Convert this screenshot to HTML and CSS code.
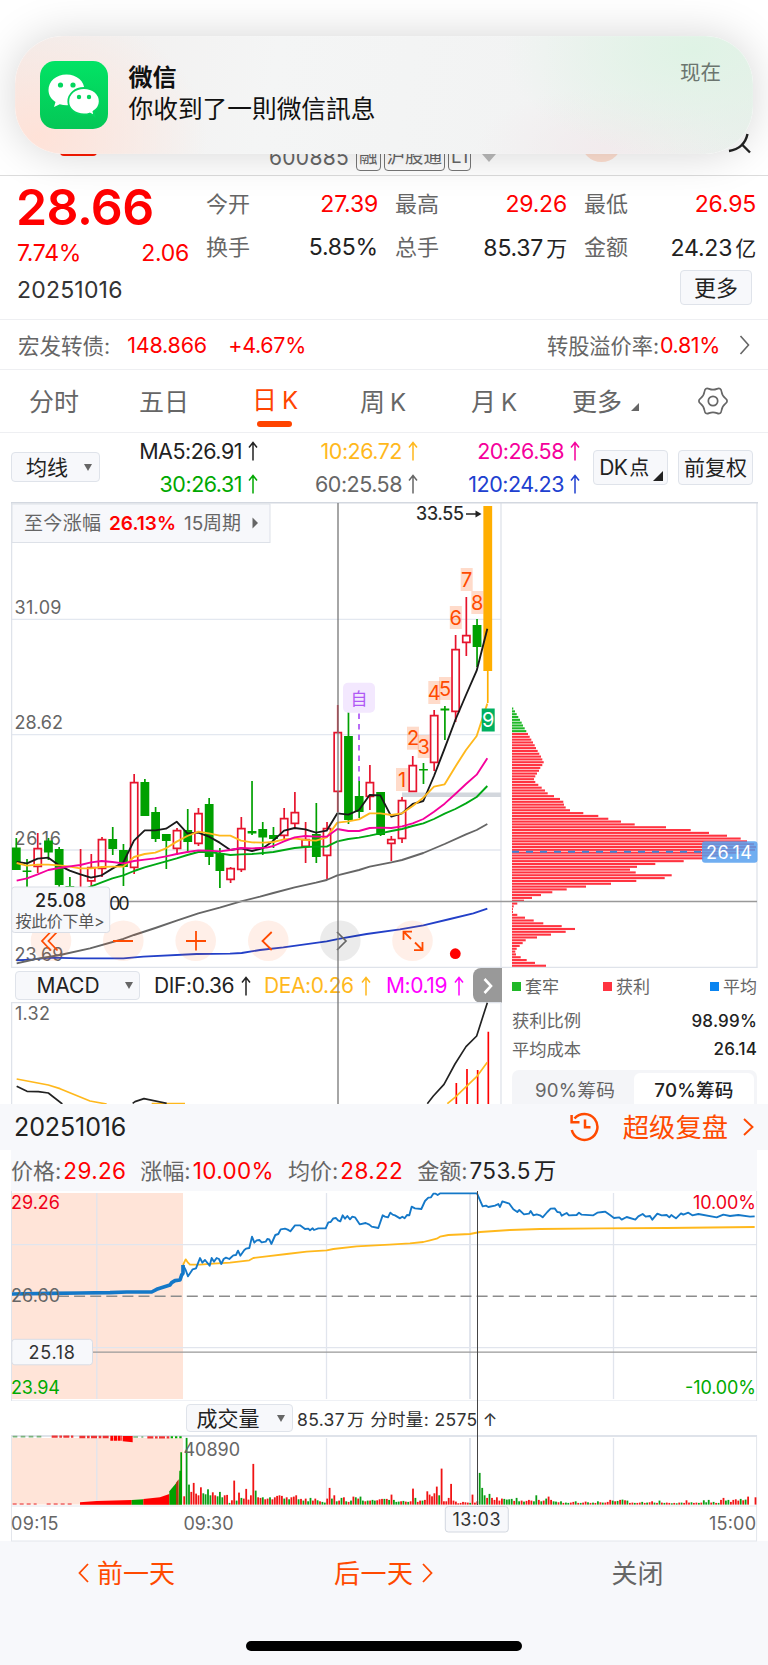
FILE: index.html
```html
<!DOCTYPE html>
<html lang="zh-CN">
<head>
<meta charset="utf-8">
<title>600885 日K</title>
<link rel="stylesheet" href="styles.css">
</head>
<body>
<div class="screen">
  <header class="nav">
    <span class="nav-dash"></span>
    <div class="nav-code"><span class="code">600885</span><i class="tag">融</i><i class="tag">沪股通</i><i class="tag">L1</i><b class="nav-caret"></b></div>
    <span class="nav-dot"></span>
    <svg class="nav-search" width="26" height="24" viewBox="726 132 26 24"><path d="M747.500 134C746 141 741 149 729 151M742 144.500L750 152.500" fill="none" stroke="#222" stroke-width="2.400"/></svg>
  </header>

  <section class="quote">
    <div class="price-box">
      <div class="last">28.66</div>
      <div class="chg"><span>7.74%</span><span>2.06</span></div>
    </div>
    <dl class="stats">
      <div><dt>今开</dt><dd class="up">27.39</dd></div>
      <div><dt>最高</dt><dd class="up">29.26</dd></div>
      <div><dt>最低</dt><dd class="up">26.95</dd></div>
      <div><dt>换手</dt><dd>5.85%</dd></div>
      <div><dt>总手</dt><dd>85.37<em>万</em></dd></div>
      <div><dt>金额</dt><dd>24.23<em>亿</em></dd></div>
    </dl>
    <div class="date">20251016</div>
    <button class="btn more">更多</button>
  </section>

  <section class="bond">
    <span class="lbl">宏发转债:</span><span class="up v1">148.866</span><span class="up v2">+4.67%</span>
    <span class="lbl right">转股溢价率:</span><span class="up v3">0.81%</span>
    <svg class="chev" width="11" height="20" viewBox="0 0 11 20"><path d="M1.500 1L9.500 10L1.500 19" fill="none" stroke="#666" stroke-width="1.600"/></svg>
  </section>

  <nav class="tabs">
    <span class="t1">分时</span><span class="t2">五日</span><span class="t3 on">日<i>K</i></span><span class="t4">周<i>K</i></span><span class="t5">月<i>K</i></span><span class="t6">更多<b></b></span>
    <svg class="gear" width="30" height="28" viewBox="-15 -14 30 28"><path d="M12.450 -2.600Q15.800 0 12.450 2.600Q9.100 5.250 8.500 9.500Q7.900 13.700 3.950 12.100Q0 10.500 -3.950 12.100Q-7.900 13.700 -8.500 9.500Q-9.100 5.250 -12.450 2.600Q-15.800 0 -12.450 -2.600Q-9.100 -5.250 -8.500 -9.500Q-7.900 -13.700 -3.950 -12.100Q0 -10.500 3.950 -12.100Q7.900 -13.700 8.500 -9.500Q9.100 -5.250 12.450 -2.600Z" fill="none" stroke="#666" stroke-width="1.700" stroke-linejoin="round"/><circle r="4.700" fill="none" stroke="#666" stroke-width="1.700"/></svg>
  </nav>

  <section class="ma">
    <button class="btn ma-btn"><span class="up2">均线</span><b class="caret"></b></button>
    <div class="ma-grid">
      <span class="k">MA5:26.91<svg class="arr" width="10" height="20" viewBox="0 0 10 20"><path d="M5 19.500V1.500M1 6.500L5 1.500L9 6.500"/></svg></span>
      <span class="y">10:26.72<svg class="arr" width="10" height="20" viewBox="0 0 10 20"><path d="M5 19.500V1.500M1 6.500L5 1.500L9 6.500"/></svg></span>
      <span class="p">20:26.58<svg class="arr" width="10" height="20" viewBox="0 0 10 20"><path d="M5 19.500V1.500M1 6.500L5 1.500L9 6.500"/></svg></span>
      <span class="g">30:26.31<svg class="arr" width="10" height="20" viewBox="0 0 10 20"><path d="M5 19.500V1.500M1 6.500L5 1.500L9 6.500"/></svg></span>
      <span class="s">60:25.58<svg class="arr" width="10" height="20" viewBox="0 0 10 20"><path d="M5 19.500V1.500M1 6.500L5 1.500L9 6.500"/></svg></span>
      <span class="b">120:24.23<svg class="arr" width="10" height="20" viewBox="0 0 10 20"><path d="M5 19.500V1.500M1 6.500L5 1.500L9 6.500"/></svg></span>
    </div>
    <button class="btn dk"><span class="up2">DK<em>点</em></span><b></b></button>
    <button class="btn fq"><span class="up2">前复权</span></button>
  </section>

  <section class="kline">
    <svg class="price" width="748" height="466" viewBox="11 502 748 466">
      <g fill="none" stroke="#dfe3ea" stroke-width="1.300">
        <path d="M11 619.300H501M11 734.700H501M11 850H501" stroke="#e3e8f0"/>
        <path d="M11.600 502V968M501 503V968M757 503V968M11 967.300H757"/>
        <path d="M11 502.800H758" stroke="#d3d8e0" stroke-width="1.600"/>
      </g>
      <g class="t" fill="#666" font-size="18">
        <text x="14.500" y="613.500" textLength="47">31.09</text>
        <text x="14.500" y="729" textLength="48.500">28.62</text>
        <text x="14.500" y="844.800" textLength="46.500">26.16</text>
        <text x="14.500" y="960.800" textLength="49">23.69</text>
      </g>
      <rect x="402" y="792.500" width="99" height="4.500" fill="#d3d7dd"/>
      <g id="candles"></g>
      <g id="averages"></g>
      <g id="chips"></g>
      <path d="M512 851.700H702" stroke="#3a86d8" stroke-width="2" stroke-dasharray="7 7"/>
      <path d="M110 901.500H757" stroke="#999" stroke-width="1.300"/>
      <rect x="702" y="841.300" width="55.500" height="21.500" rx="3" fill="#559fee" fill-opacity=".84"/>
      <text class="t" x="706" y="858.500" font-size="18" fill="#fff" textLength="46">26.14</text>
      <g id="marks" class="t" font-size="20" text-anchor="middle"></g>
      <rect x="343" y="682.700" width="32" height="30" rx="5" fill="#f3e8fe"/>
      <text class="t" x="359" y="705" font-size="17" fill="#b05af5" text-anchor="middle">自</text>
      <path d="M359 713.500V781" stroke="#b96cf7" stroke-width="2" stroke-dasharray="5.500 5"/>
      <text class="t" x="416" y="520" font-size="18" fill="#222" stroke="#222" stroke-width=".2" textLength="48">33.55</text>
      <path d="M466 514H478" stroke="#222" stroke-width="1.500"/><path d="M475.500 510.500L481.500 514L475.500 517.500Z" fill="#222"/>
      <g>
        <g fill="#ff6420" fill-opacity=".1"><circle cx="51" cy="940.700" r="20.300"/><circle cx="123.300" cy="940.700" r="20.300"/><circle cx="195.700" cy="940.700" r="20.300"/><circle cx="268.300" cy="940.700" r="20.300"/><circle cx="412.500" cy="940.700" r="20.300"/></g>
        <circle cx="340.300" cy="940.700" r="20.300" fill="#000" fill-opacity=".08"/>
        <g fill="none" stroke="#ff4a00" stroke-width="1.800">
          <path d="M51 931.500L42 941L51 950.500M57.500 931.500L48.500 941L57.500 950.500M113 941H133M186 941H206M196 931V950.500M271.700 932L262.500 941L271.700 950"/>
          <path d="M403.500 940V931.700H412M404 932L411 939M415 942.500L422 949.500M422.500 942V950.200H414"/>
        </g>
        <path d="M337 932L346 941L337 950" fill="none" stroke="#666" stroke-width="1.700"/>
        <circle cx="455.300" cy="953.700" r="5.400" fill="#f00"/>
      </g>
      <text class="t" x="109" y="910" font-size="18" fill="#222" textLength="20.500">00</text>
      <rect x="11.700" y="887" width="98" height="45.500" rx="3" fill="#f7f8fb" stroke="#d9dde5"/>
      <text class="t" x="35" y="907" font-size="18" font-weight="500" fill="#222" textLength="51">25.08</text>
      <text class="t" x="15.500" y="926.500" font-size="16" fill="#555" textLength="89">按此价下单&gt;</text>
      <rect x="12" y="504" width="258" height="38.500" fill="#f7f8fb" fill-opacity=".96" stroke="#dde1e8"/>
      <g class="t" font-size="19">
        <text x="24" y="530" fill="#666" textLength="77">至今涨幅</text>
        <text x="109" y="530" fill="#f00" font-weight="600" textLength="67">26.13%</text>
        <text x="184" y="530" fill="#666" textLength="57">15周期</text>
      </g>
      <path d="M252.500 517.500L258 523L252.500 528.500Z" fill="#666"/>
    </svg>
    <div class="split">
      <div class="macd">
        <div class="macd-bar">
          <button class="btn macd-btn">MACD<b class="caret"></b></button>
          <span class="m1 k">DIF:0.36<svg class="arr" width="10" height="20" viewBox="0 0 10 20"><path d="M5 19.500V1.500M1 6.500L5 1.500L9 6.500"/></svg></span>
          <span class="m2 y">DEA:0.26<svg class="arr" width="10" height="20" viewBox="0 0 10 20"><path d="M5 19.500V1.500M1 6.500L5 1.500L9 6.500"/></svg></span>
          <span class="m3 f">M:0.19<svg class="arr" width="10" height="20" viewBox="0 0 10 20"><path d="M5 19.500V1.500M1 6.500L5 1.500L9 6.500"/></svg></span>
          <span class="next"><svg width="12" height="18" viewBox="0 0 12 18"><path d="M2.500 2L9 9L2.500 16" fill="none" stroke="#fff" stroke-width="2.600"/></svg></span>
        </div>
        <svg width="491" height="102" viewBox="11 1002 491 102">
          <path d="M11 1002.500H501M11.600 1002V1104M501 1002V1104" stroke="#dfe3ea" stroke-width="1.300" fill="none"/>
          <text class="t" x="15" y="1020" font-size="18" fill="#666" textLength="35">1.32</text>
          <g transform="translate(0 900) scale(.33333)" fill="none" stroke-width="5" stroke-linejoin="round">
            <path d="M1369 549V612M1401 507V612M1433 510V612M1465 395V612" stroke="#f00"/>
            <path d="M50 537L145 555L180 566L270 603L320 612M455 611H555M1342 611L1365 592L1430 530L1462 487" stroke="#ffb81c"/>
            <path d="M50 559L81 574L115 575L145 579L187 612M398 610L405 605L432 596L500 610M1282 611L1300 588L1332 553L1365 492L1398 440L1430 408L1462 308" stroke="#222"/>
          </g>
        </svg>
      </div>
      <div class="chip-info">
        <div class="legend"><span><i class="lg"></i>套牢</span><span><i class="lr"></i>获利</span><span><i class="lb"></i>平均</span></div>
        <div class="ci"><span>获利比例</span><b>98.99%</b></div>
        <div class="ci"><span>平均成本</span><b>26.14</b></div>
        <div class="seg"><span>90%筹码</span><span class="sel">70%筹码</span></div>
      </div>
    </div>
    <i class="cross"></i>
  </section>

  <section class="replay">
    <div class="replay-head">
      <span class="rd">20251016</span>
      <svg class="hist" width="30" height="30" viewBox="570 1112 30 30"><path d="M575.500 1118.500A13 13 0 1 1 572.800 1130M572.600 1115V1122.300H580.500M586 1119.500V1127.300H591.500" fill="none" stroke="#ff4a00" stroke-width="2.500"/></svg>
      <span class="rt">超级复盘</span>
      <svg class="rchev" width="11" height="18" viewBox="0 0 11 18"><path d="M1 1L9.500 9L1 17" fill="none" stroke="#ff4a00" stroke-width="1.900"/></svg>
    </div>
    <div class="replay-info">
      <span>价格:<b>29.26</b></span><span>涨幅:<b>10.00%</b></span><span>均价:<b>28.22</b></span><span>金额:<b class="d">753.5<em>万</em></b></span>
    </div>
    <div class="intraday">
      <svg width="748" height="210" viewBox="11 1191 748 210">
        <rect x="11" y="1191" width="747" height="210" fill="#fff"/>
        <rect x="11.500" y="1193" width="171.500" height="206" fill="#ffe4d8"/>
        <path d="M96.800 1193V1399M326.500 1193V1399M613.500 1193V1399M11 1244.700H757M11 1347.700H757" stroke="#e1e5ed" stroke-width="1.300"/>
        <path d="M470 1193V1399" stroke="#e1e5ed" stroke-width="2"/>
        <path d="M11.500 1191V1401M756.600 1191V1401M11 1401H757" stroke="#dfe3ea" fill="none"/>
        <path d="M58 1296.200H757" stroke="#8c8c8c" stroke-width="1.600" stroke-dasharray="11 5.100"/>
        <path d="M92 1352.200H757" stroke="#999" stroke-width="1.200"/>
        <g id="minutes"></g>
        <g class="t" font-size="18">
          <text x="11" y="1208.800" fill="#f00018" textLength="49">29.26</text>
          <text x="693" y="1208.800" fill="#f00018" textLength="63">10.00%</text>
          <text x="11" y="1301.700" fill="#666" textLength="49">26.60</text>
          <text x="11" y="1394.300" fill="#0a0" textLength="49">23.94</text>
          <text x="685" y="1394.300" fill="#0a0" textLength="71">-10.00%</text>
        </g>
        <rect x="11.800" y="1339.300" width="80.700" height="25.500" rx="3" fill="#f7f8fb" stroke="#d9dde5"/>
        <text class="t" x="28.500" y="1359" font-size="18" fill="#333" textLength="46.500">25.18</text>
      </svg>
      <div class="vol-bar"><button class="btn vol-btn"><span class="up2">成交量</span><b class="caret"></b></button><span>85.37<em>万</em> 分时量: 2575 ↑</span></div>
      <svg width="748" height="107" viewBox="11 1435 748 107">
        <rect x="11.500" y="1438" width="171.500" height="66.500" fill="#ffe4d8"/>
        <path d="M96.800 1438V1504M326.500 1438V1504M613.500 1438V1504" stroke="#e1e5ed" stroke-width="1.300"/>
        <path d="M470 1438V1504" stroke="#e1e5ed" stroke-width="2"/>
        <path d="M11.500 1435V1541M756.600 1435V1541M11 1506H757M11 1541H757" stroke="#e3e6ec" fill="none"/>
        <path d="M11 1436H757" stroke="#dfe3ea" stroke-width="2"/>
        <g id="volume"></g>
        <g class="t" font-size="18" fill="#666">
          <text x="183.500" y="1455.500" textLength="56.500">40890</text>
          <text x="11" y="1530" textLength="47.500">09:15</text>
          <text x="183.500" y="1530" textLength="50">09:30</text>
          <text x="709" y="1530" textLength="47">15:00</text>
        </g>
        <rect x="445.300" y="1506.500" width="63" height="25.500" rx="3" fill="#f7f8fb" stroke="#d3d8e0"/>
        <text class="t" x="452.500" y="1526" font-size="18" fill="#333" textLength="48">13:03</text>
      </svg>
      <i class="cross2"></i>
    </div>
    <footer class="foot">
      <span class="f1"><svg width="11" height="20" viewBox="0 0 11 20"><path d="M10 1L1.500 10L10 19" fill="none" stroke="#ff4a00" stroke-width="1.800"/></svg>前一天</span>
      <span class="f2">后一天<svg width="11" height="20" viewBox="0 0 11 20"><path d="M1 1L9.500 10L1 19" fill="none" stroke="#ff4a00" stroke-width="1.800"/></svg></span>
      <span class="f3">关闭</span>
    </footer>
    <i class="home"></i>
  </section>

  <aside class="notice">
    <svg class="wx" width="68" height="68" viewBox="0 0 68 68">
      <defs><linearGradient id="wxg" x1="0" y1="0" x2="0" y2="1"><stop offset="0" stop-color="#02e365"/><stop offset="1" stop-color="#04c756"/></linearGradient></defs>
      <rect width="68" height="68" rx="15" fill="url(#wxg)"/>
      <path d="M26.500 13.500C16 13.500 8.500 20.500 8.500 29C8.500 34 11 38 15.500 41L14 46L19.800 43.200C22 44 24.300 44.300 26.500 44.300C37 44.300 44.500 37.500 44.500 29C44.500 20.500 37 13.500 26.500 13.500Z" fill="#fff"/>
      <path d="M44 27C35 27 28.300 33 28.300 40.500C28.300 48 35 53.500 44 53.500C46 53.500 48 53.200 49.800 52.500L54.500 55L53.500 50.600C57.500 48 59.700 44.500 59.700 40.500C59.700 33 53 27 44 27Z" fill="#fff" stroke="#03d55e" stroke-width="1.800"/>
      <g fill="#03d65e"><circle cx="20.500" cy="24" r="2.600"/><circle cx="33" cy="24" r="2.600"/><circle cx="39" cy="36" r="2.200"/><circle cx="49" cy="36" r="2.200"/></g>
    </svg>
    <div class="msg"><b>微信</b><span>你收到了一則微信訊息</span></div>
    <time>现在</time>
  </aside>
</div>
<script src="charts.js"></script>
</body>
</html>
```

FILE: styles.css
```css
* { box-sizing: border-box; margin: 0; padding: 0; }
body { width: 768px; background: #fff; font-family: Inter, "Noto Sans CJK SC", sans-serif; color: #222; }
i, em { font-style: normal; }
svg { display: block; flex: none; }
span { white-space: nowrap; }
.t { font-family: Inter, "Noto Sans CJK SC", sans-serif; }
.screen { position: relative; width: 768px; height: 1665px; overflow: hidden; }
.up { color: #f00; }
.btn { font: inherit; display: flex; align-items: center; justify-content: center; background: #f7f8fb; border: 1.5px solid #dfe3ea; border-radius: 4px; color: #222; }
.btn .up2 { padding-bottom: 3px; }
.caret { width: 0; height: 0; border: 4.500px solid transparent; border-top: 7px solid #666; border-bottom: 0; }
.arr { fill: none; stroke: currentColor; stroke-width: 1.5; }
.k { color: #222; } .y { color: #ffb81c; } .p { color: #f5009b; } .g { color: #00a800; } .s { color: #666; } .b { color: #2040d0; } .f { color: #f0f; }

.nav { height: 176px; border-bottom: 1.5px solid #dcdcdc; position: relative; display: flex; align-items: flex-end; }
.nav-code { display: flex; align-items: center; height: 35px; margin-left: 269px; color: #666; }
.code { font-size: 21px; width: 87px; letter-spacing: .3px; }
.tag { font-size: 18.500px; line-height: 23px; height: 27px; border: 1.5px solid #777; border-radius: 4px; padding: 0 2px; margin-right: 3px; }
.nav-caret { border: 7px solid transparent; border-top: 8px solid #bbb; border-bottom: 0; margin-left: 8px; }
.nav-dash { position: absolute; left: 60px; top: 146px; width: 37px; height: 10px; border-radius: 4px; background: #ff1a00; }
.nav-dot { position: absolute; left: 581px; top: 121px; width: 41px; height: 41px; border-radius: 50%; background: #ffe0d2; }
.nav-search { position: absolute; left: 726px; top: 132px; }

.quote { height: 144px; border-bottom: 1px solid #eeeff2; display: grid; grid-template-columns: 190px 1fr 16px; grid-template-rows: 90px 1fr; }
.price-box { padding-left: 16px; }
.last { font-size: 50px; font-weight: 600; color: #f00; line-height: 60px; margin-top: 1px; letter-spacing: -.6px; }
.chg { display: flex; justify-content: space-between; color: #f00; font-size: 23px; line-height: 32px; letter-spacing: -.3px; padding-right: 1px; padding-left: 1px; }
.stats { margin-left: 16px; display: grid; grid-template-columns: 172px 172px 172px; column-gap: 17px; grid-template-rows: 43px 43px; padding-top: 6px; grid-column: 2 / 4; }
.stats div { display: flex; justify-content: space-between; align-items: center; }
.stats dt { font-size: 22px; color: #666; padding-bottom: 4px; }
.stats dd { font-size: 23px; letter-spacing: -.2px; }
.stats em { font-size: 21px; margin-left: 3px; }
.date { font-size: 23px; padding-left: 17px; line-height: 48px; letter-spacing: .2px; color: #333; }
.more { width: 72px; height: 35px; font-size: 22px; justify-self: end; margin-top: 4px; padding-bottom: 3px; }

.bond { height: 50px; border-bottom: 1px solid #eeeff2; display: flex; align-items: center; padding-left: 18px; font-size: 21.500px; }
.bond .lbl { color: #666; padding-bottom: 1px; }
.bond .v1 { margin-left: 17px; width: 101px; letter-spacing: -.2px; }
.bond .v2 { letter-spacing: -.3px; }
.bond .right { margin-left: auto; font-size: 21.200px; }
.bond .v3 { width: 79px; margin-left: 1px; letter-spacing: -.4px; }
.bond .chev { margin-right: 18px; }

.tabs { height: 63px; border-bottom: 1px solid #eeeff2; display: grid; grid-template-columns: 29px 110px 114px 107px 111px 101px 126px 70px; grid-template-rows: 60px; align-items: center; font-size: 25px; color: #666; }
.tabs i { margin-left: 5px; font-size: 24px; }
.t1 { grid-column: 2; }
.tabs .t3 { margin-left: -1px; }
.tabs .on { color: #ff4400; position: relative; line-height: 60px; }
.on::after { content: ""; position: absolute; left: 5px; bottom: 4px; width: 35px; height: 6px; border-radius: 3px; background: #ff4400; }
.t6 b { display: inline-block; border-left: 8px solid transparent; border-bottom: 8px solid #666; margin-left: 9px; }
.gear { margin-top: 2px; }

.ma { height: 69px; display: flex; align-items: center; padding-left: 11px; }
.ma-btn { width: 89px; height: 30px; font-size: 21px; gap: 16px; padding-left: 7px; margin-top: -1px; }
.ma-grid { display: grid; grid-template-columns: 158px 160px 162px; grid-template-rows: 33px 33px; width: 480px; font-size: 21.500px; letter-spacing: -.5px; margin-top: -1px; }
.ma-grid span { display: flex; justify-content: flex-end; align-items: center; gap: 6px; }
.dk { width: 75px; height: 35px; margin-left: 13px; font-size: 21px; position: relative; padding-right: 13px; letter-spacing: -.6px; }
.dk em { margin-left: 2px; font-size: 20px; }
.dk b { position: absolute; right: 4px; bottom: 3px; border-left: 10px solid transparent; border-bottom: 10px solid #222; }
.fq { width: 75px; height: 35px; margin-left: 10px; font-size: 21px; }

.kline { position: relative; height: 602px; padding-left: 11px; overflow: hidden; }
.kline .price { height: 466px; }
.cross { position: absolute; left: 337px; top: 1px; width: 1.500px; height: 601px; background: #777; opacity: .65; }
.split { display: flex; height: 136px; margin-top: -1px; }
.macd { width: 491px; }
.macd-bar { height: 35px; display: grid; grid-template-columns: 4px 125px 14px 110px 122px 87px 29px; align-items: center; font-size: 21px; letter-spacing: -.4px; }
.macd-bar span { display: flex; align-items: center; gap: 7px; margin-top: 1px; }
.macd-btn { grid-column: 2; height: 29px; letter-spacing: 0; gap: 25px; padding-left: 14px; margin-top: 1px; }
.m1 { grid-column: 4; }
.macd-bar .next { height: 35px; background: #999; border-radius: 8px 0 0 8px; justify-content: center; }
.chip-info { margin-left: 10px; width: 245px; font-size: 17px; color: #666; }
.legend { display: grid; grid-template-columns: 91px 1fr auto; height: 37px; align-items: center; }
.legend span { display: flex; align-items: center; gap: 4px; }
.legend i { width: 9px; height: 9px; margin-top: 2px; }
.lg { background: #20b828; } .lr { background: #ff3340; } .lb { background: #0a84f0; }
.ci { display: flex; justify-content: space-between; height: 28.500px; align-items: center; }
.ci:nth-child(2) { margin-top: 2px; }
.ci b { font-weight: 500; color: #222; letter-spacing: .2px; padding-top: 1px; }
.ci span { font-size: 17.300px; padding-bottom: 1px; }
.seg { margin-top: 7px; height: 50px; border-radius: 7px; background: #f4f5f8; display: grid; grid-template-columns: 122px 120px; padding-top: 3px; font-size: 18.700px; }
.seg span { height: 47px; line-height: 35px; text-align: center; border-radius: 6px; letter-spacing: .2px; padding-left: 4px; }
.seg .sel { background: #fff; color: #222; font-weight: 500; padding: 0; }

.replay { position: relative; background: #f7f8fb; height: 561px; }
.replay-head { height: 46px; display: flex; align-items: center; padding: 0 14px 0 14px; }
.rd { font-size: 25px; letter-spacing: -.1px; }
.hist { margin-left: auto; }
.rt { color: #ff4a00; font-size: 26.300px; margin-left: 24px; margin-right: 15px; padding-bottom: 3px; }
.replay-info { height: 41px; display: flex; align-items: center; gap: 14px; font-size: 22px; color: #666; border: solid #fff; border-width: 0 11px; padding-bottom: 3px; }
.replay-info b { font-weight: 400; color: #f00; margin-left: 2px; letter-spacing: .35px; font-size: 22.500px; }
.replay-info .d { color: #222; }
.replay-info em { margin-left: 3px; }
.intraday { position: relative; height: 350px; background: #fff; padding-left: 11px; }
.vol-bar { height: 34px; display: flex; align-items: center; padding-left: 175px; font-size: 17.500px; letter-spacing: .35px; color: #333; }
.vol-bar em { margin-left: 2px; }
.vol-btn { width: 107px; height: 28px; font-size: 21px; gap: 17px; margin-right: 4px; padding-left: 2px; letter-spacing: 0; }
.cross2 { position: absolute; left: 477px; top: 0; width: 1px; height: 314px; background: #444; }
.foot { height: 60px; display: flex; align-items: center; font-size: 26px; color: #ff4a00; }
.foot span { display: flex; align-items: center; gap: 8px; }
.foot svg { margin-top: 3px; }
.f1 { margin-left: 78px; }
.f2 { margin-left: 159px; letter-spacing: .5px; }
.foot .f3 { margin-left: 179px; color: #666; }
.home { position: absolute; left: 246px; top: 537px; width: 276px; height: 9.500px; border-radius: 5px; background: #000; }

.notice { position: absolute; left: 15px; top: 36px; width: 738px; height: 118px; border-radius: 48px; display: flex; padding: 25px 32px 0 24.500px; 
  background: radial-gradient(ellipse 190px 110px at 92% 12%, #dff3e5 0, #e3f2e700 100%), radial-gradient(ellipse 170px 130px at 3% 85%, #ffe2d8 0, #fde6dd00 100%), radial-gradient(ellipse 130px 60px at 80% 95%, #f2ebed 0, #f4ecef00 100%), linear-gradient(100deg, #f1eeed, #f4f5f5 35%, #f2f3f3 70%, #eaefec);
  box-shadow: 0 0 44px rgba(0,0,0,.17), inset 0 0 1px #fff; }
.msg { margin-left: 21px; display: flex; flex-direction: column; }
.msg b { font-size: 24px; line-height: 34px; font-weight: 600; color: #111; }
.msg span { font-size: 24.700px; line-height: 29px; color: #111; font-family: Inter, "Noto Sans CJK TC", sans-serif; }
.notice time { margin-left: auto; font-size: 20.500px; line-height: 24px; color: #6b756f; }
```

FILE: charts.js
```js
const add = (id, html) => { document.getElementById(id).innerHTML += html; };

// Daily candles: [direction, body top, body bottom, wick top, wick bottom]
const days = [
  ['g',847.5,870,838,870],['g',870.5,872,859,887],['r',848,867,833,873],['g',840.5,852.5,838,860],['g',849,885,847,887],
  ['g',886,900,877,900],['r',890,895,849,900],['r',867,881.5,854,890],['r',839,869,837,877],['g',839,849,827,855],
  ['g',850,867,844,886],['r',782,868,774,874],['g',782,816,779,816],['g',812,839,807,842],['g',834,841,834,869],
  ['r',830,849,828,855],['g',830,842,809,852],['r',813,844,808,846],['g',804,857,798,865],['g',853,871,848,888],
  ['r',868,880,867,883],['r',828,870,817,872],['g',831,833.5,781,835],['g',829,837.5,822,855],['g',835,839,827,848],
  ['r',818,836,808,840],['r',812,824,792,828],['r',839,847,822,863],['g',834,857,803,863],['r',828,856,822,879],
  ['r',732,792,705,812],['g',736,820,707,824],['g',796,812,781,818],['r',782,797,765,810],['g',792,835,792,836],
  ['r',839,844,836,861],['r',800,839,797,843],['r',765,792,756,792],['g',769,770.5,763,784],['r',715,763,710,771],
  ['g',708.5,710.5,706,740],['r',649,712,635,722],['r',635,643,597,656],['g',625,647,619,667],['o',506,671,506,703]
];
const ink = { r: '#e6142d', g: '#00a000', o: '#ffae00' };
add('candles', days.map(([d, t, b, w1, w2], i) => {
  const x = 16.3 + i * 10.715, c = ink[d];
  if (d === 'r') return `<path d="M${x} ${w1}V${t}M${x} ${b}V${w2}M${x - 3.6} ${t + .6}H${x + 3.6}V${b - .6}H${x - 3.6}Z" fill="none" stroke="${c}" stroke-width="1.7"/>`;
  return `<path d="M${x} ${w1}V${w2}" stroke="${c}" stroke-width="1.7"/><rect x="${x - 4.4}" y="${t}" width="8.8" height="${b - t}" fill="${c}"/>`;
}).join(''));

// Moving averages, in thirds of a pixel below y = 500
const averages = {
  '#2340c8': '50,1381 100,1378 150,1373 240,1375 370,1375 430,1370 590,1362 690,1361 725,1359 780,1350 850,1342 980,1324 1020,1316 1100,1302 1200,1288 1270,1276 1350,1257 1420,1240 1462,1226',
  '#666': '50,1390 81,1383 113,1376 145,1371 180,1365 270,1345 370,1317 402,1305 466,1284 530,1262 595,1240 659,1223 723,1204 780,1190 820,1179 884,1162 948,1148 980,1140 1012,1126 1077,1110 1109,1100 1174,1087 1206,1080 1270,1059 1334,1032 1398,1003 1430,990 1462,972',
  '#00a814': '240,1172 272,1160 305,1147 337,1135 370,1126 402,1113 434,1102 466,1093 498,1084 530,1075 562,1065 595,1056 627,1056 659,1060 691,1065 723,1063 756,1062 790,1059 820,1056 852,1050 884,1044 916,1041 948,1040 980,1040 1012,1024 1045,1017 1077,1013 1109,1007 1141,1000 1174,993 1206,987 1238,978 1270,970 1302,957 1334,941 1366,927 1398,910 1430,891 1462,858',
  '#1a1a1a': '50,1086 81,1090 113,1076 145,1073 177,1096 209,1112 241,1123 273,1133 305,1126 337,1106 370,1087 402,1022 434,991 466,991 498,986 530,965 562,1000 595,998 627,1010 659,1028 691,1050 723,1045 756,1053 790,1044 820,1022 852,992 884,984 916,988 948,998 980,992 1012,940 1045,944 1077,930 1109,885 1141,886 1174,950 1206,940 1238,912 1270,903 1302,828 1334,745 1366,660 1398,585 1430,512 1462,386',
  '#ffb81c': '50,1089 81,1097 113,1094 145,1094 177,1096 209,1100 241,1105 273,1105 305,1101 337,1100 370,1100 402,1071 434,1062 466,1058 498,1045 530,1025 562,1008 595,995 627,1000 659,1007 691,1007 723,1022 756,1027 790,1028 820,1026 852,1018 884,1015 916,1020 948,1022 980,1012 1012,968 1045,964 1077,958 1109,940 1141,940 1174,945 1206,940 1238,918 1270,893 1302,860 1334,853 1366,800 1398,750 1430,708 1462,611',
  '#f5009b': '50,1142 81,1135 113,1123 145,1110 177,1104 209,1099 241,1095 273,1087 305,1083 337,1086 370,1090 402,1083 434,1079 466,1075 498,1069 530,1062 562,1056 595,1051 627,1052 659,1054 691,1050 723,1044 756,1045 800,1043 820,1038 852,1024 884,1012 916,1008 948,1010 980,1010 1012,987 1045,993 1077,993 1109,984 1141,983 1174,984 1206,979 1238,970 1270,957 1302,935 1334,911 1366,882 1398,852 1430,824 1462,775'
};
add('averages', '<g transform="translate(0 500) scale(.33333)" fill="none" stroke-width="5.6" stroke-linejoin="round">' +
  Object.entries(averages).map(([c, p]) => `<polyline points="${p}" stroke="${c}"/>`).join('') + '</g>');

// Cost distribution, top to bottom
const chips = [4,9,14,19,24,29,33,38,43,48,53,58,63,68,72,77,82,87,91,95,91,85,81,75,70,66,70,79,89,99,107,126,144,154,156,161,174,214,259,289,327,368,462,536,591,645,686,705,726,732,729,684,630,574,515,430,375,354,371,479,458,373,297,222,164,121,87,60,36,16,5,3,3,16,39,65,94,149,189,161,117,75,41,32,23,14,10,12,26,44,69,102];
add('chips', chips.map((w, i) => `<rect x="512" y="${(707.5 + i * 2.826).toFixed(2)}" width="${(w / 3).toFixed(1)}" height="2.100" fill="${i < 9 ? '#20b828' : '#ff3340'}"/>`).join(''));

// Nine-turn marks: [digit, centre x, top y]
add('marks', [[1,402,768],[2,413,726.7],[3,423.7,735],[4,434.3,681],[5,445,677],[6,455.8,606],[7,466.7,568],[8,477.3,591]].map(([n, x, y]) =>
  `<rect x="${x - 6}" y="${y}" width="12" height="23" fill="#ff6a20" fill-opacity=".24"/><text x="${x}" y="${y + 18.5}" fill="#ff4a00">${n}</text>`).join('') +
  '<rect x="481.700" y="708.500" width="13" height="23" fill="#00b060"/><text x="488.200" y="727" fill="#fff">9</text>');

// Minute prices, in thirds of a pixel below y = 1100
const open = '36,582 150,580 240,579 330,578 380,576 455,576 470,568 510,555 515,548 525,542 540,540 545,525 549,520 549,495';
const price = '549,495 557,510 564,529 578,508 588,505 600,474 607,488 615,480 629,497 635,474 642,485 650,474 657,477 664,492 671,477 678,473 688,477 700,466 708,465 714,452 721,467 733,450 738,446 748,444 756,410 763,428 770,421 778,420 785,427 797,425 802,417 808,418 814,432 826,405 835,402 842,388 855,386 863,389 871,394 885,376 900,376 915,387 925,386 930,391 938,385 942,390 955,385 977,385 985,367 992,366 1000,355 1008,354 1014,361 1021,364 1028,346 1035,356 1042,348 1050,358 1057,350 1065,352 1079,373 1097,369 1108,374 1115,380 1135,384 1148,346 1155,350 1164,352 1171,338 1178,344 1185,346 1200,355 1207,350 1214,355 1221,345 1228,346 1235,320 1245,325 1264,327 1275,303 1285,293 1293,292 1300,281 1307,281 1313,285 1321,280 1431,280 1448,319 1458,317 1465,321 1485,317 1495,312 1500,321 1507,304 1528,311 1540,328 1552,336 1558,330 1572,343 1587,341 1592,333 1600,346 1610,343 1620,346 1628,352 1642,336 1652,326 1664,325 1672,336 1680,337 1685,347 1700,339 1707,346 1730,345 1737,338 1745,344 1780,346 1792,338 1808,336 1816,335 1830,345 1842,354 1858,352 1865,359 1880,351 1906,359 1915,349 1928,342 1937,350 1950,348 1957,359 1972,341 1985,346 2000,345 2008,352 2014,345 2021,350 2028,355 2043,340 2050,344 2065,338 2077,346 2095,342 2150,352 2170,344 2190,348 2215,345 2250,350 2264,349';
const mean = '549,495 557,478 564,488 570,494 600,494 640,491 690,488 748,481 760,474 800,469 860,462 920,455 980,451 1000,447 1070,439 1168,434 1230,430 1270,426 1290,421 1310,416 1320,410 1345,405 1410,402 1440,396 1530,390 1620,387 1800,385 2000,384 2264,381';
add('minutes', `<g transform="translate(0 1100) scale(.33333)" fill="none" stroke-linejoin="round"><polyline points="${mean}" stroke="#ffb81c" stroke-width="5.400"/><polyline points="${price}" stroke="#1478c8" stroke-width="5.600"/><polyline points="${open}" stroke="#1478c8" stroke-width="11"/></g>`);

// Minute volumes in thirds of a pixel; negative = falling minute
const vol = [25,-200,-60,38,65,33,28,52,-34,-31,-46,-28,37,28,-25,-38,-22,28,29,-5,13,72,-12,36,-20,18,47,15,28,122,-42,22,20,-22,16,18,-22,16,22,26,28,26,-18,22,-16,22,24,28,-16,17,-12,18,-10,-20,12,18,-13,10,-8,-6,18,50,-18,28,-10,12,-20,22,-10,8,-12,24,-22,18,-24,-12,10,-12,12,-14,-12,13,16,17,-17,17,-14,30,-14,-8,-9,10,-11,9,-8,10,48,-20,8,12,-12,14,40,30,25,34,54,-28,108,10,10,20,62,12,9,4,5,8,7,6,-5,30,6,10,-95,-50,-28,20,-32,20,14,22,12,18,-17,-15,-16,-17,11,-20,-10,12,-9,11,14,12,-10,-28,14,-10,12,-18,24,14,-10,-9,7,-10,5,-6,-5,6,8,-10,5,-5,6,9,-7,5,-6,5,-10,7,-6,6,8,14,-12,10,-11,14,-15,13,-12,5,6,-5,5,6,-8,5,-6,7,10,-6,5,-12,6,-5,6,5,-4,5,-4,6,-6,5,13,6,-7,5,6,-5,6,-13,-7,-14,6,-8,5,-5,14,20,-12,-14,8,14,16,12,-17,13,-15,24,0,0,22];
const step = (755.2 - 183.3) / (vol.length - 1);
const late = 124, early = 2.383;
const at = i => i <= late ? 183.3 + i * early : 183.3 + late * early + (i - late) * (754.6 - 183.3 - late * early) / (vol.length - 1 - late);
let bars = vol.map((v, i) => v ? `<rect x="${at(i).toFixed(1)}" y="${(1504.6 - Math.abs(v) / 3).toFixed(1)}" width="1.800" height="${(Math.abs(v) / 3).toFixed(1)}" fill="${v > 0 ? '#f01414' : '#0a9d14'}"/>` : '').join('');
const pre = (points, c) => `<polygon points="${points}" fill="${c}"/>`;
bars += '<g transform="translate(0 1400) scale(.33333)">' +
  '<path d="M38 312H110M140 312H220" stroke="#e66" stroke-width="4" stroke-dasharray="12 9"/>' +
  pre('240,314 240,307 290,303 395,300 395,314', '#f00') + pre('395,314 395,300 430,298 430,314', '#00a000') +
  pre('430,314 430,297 480,292 508,282 508,314', '#f00') + pre('508,314 508,274 528,250 528,314', '#00a000') +
  pre('528,314 528,248 536,238 536,314', '#a83a10') + pre('536,314 538,212 541,212 541,157 546,157 546,314', '#00a000') +
  '<path d="M38 110H130M400 111H430" stroke="#7bb37b" stroke-width="5" stroke-dasharray="14 10"/>' +
  '<path d="M155 110H220M238 111H330M442 112H510" stroke="#e33" stroke-width="7" stroke-dasharray="18 5 8 4"/>' +
  '<path d="M331 115H366" stroke="#f00" stroke-width="15" stroke-dasharray="9 2"/>' + pre('368,108 368,124 398,127 398,108', '#f00') +
  '<path d="M512 112H545" stroke="#0a0" stroke-width="6" stroke-dasharray="7 6"/></g>';
add('volume', bars);
```
